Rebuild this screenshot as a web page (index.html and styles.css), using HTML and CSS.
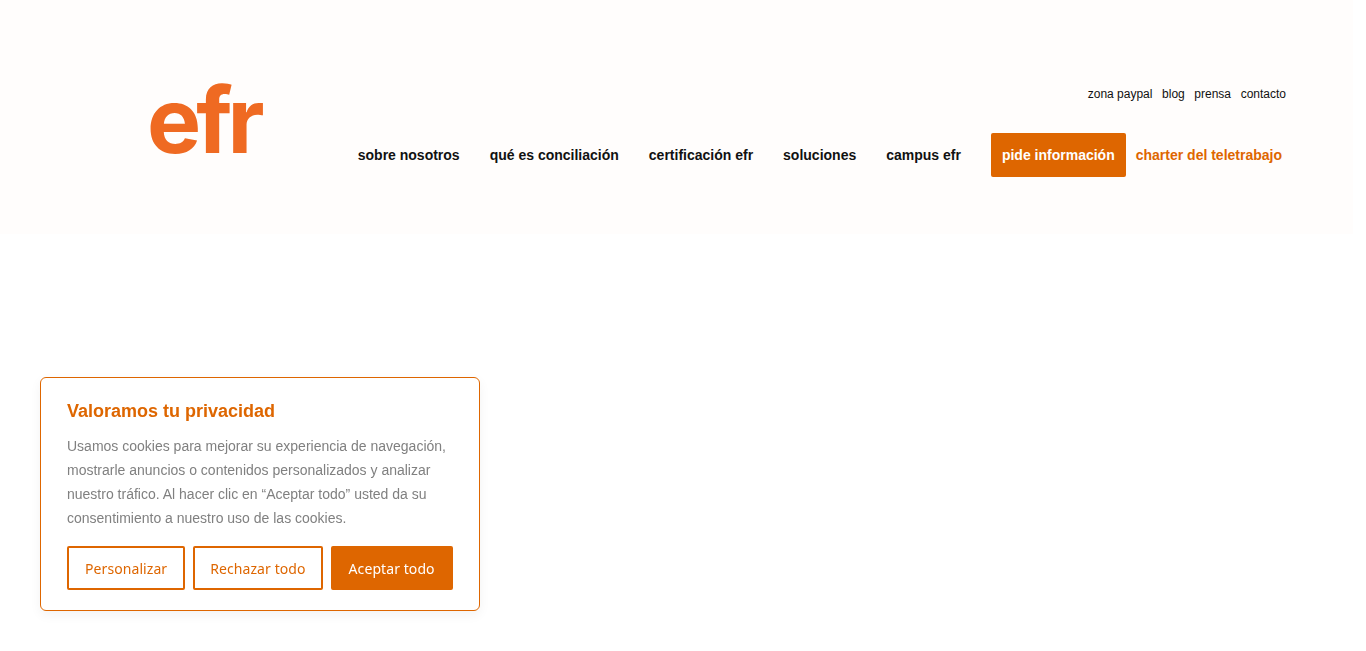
FILE: index.html
```html
<!DOCTYPE html>
<html lang="es">
<head>
    <meta charset="UTF-8">
    <meta name="viewport" content="width=device-width, initial-scale=1.0">
    <title>efr</title>
    <link rel="stylesheet" href="styles.css">
</head>
<body>
    <header class="site-header">
        <a class="logo" href="#">efr</a>
        <div class="nav-area">
            <nav class="top-nav">
                <a href="#">zona paypal</a>
                <a href="#">blog</a>
                <a href="#">prensa</a>
                <a href="#">contacto</a>
            </nav>
            <nav class="main-nav">
                <a href="#">sobre nosotros</a>
                <a href="#">qué es conciliación</a>
                <a href="#">certificación efr</a>
                <a href="#">soluciones</a>
                <a href="#">campus efr</a>
                <a class="nav-button" href="#">pide información</a>
                <a class="nav-accent" href="#">charter del teletrabajo</a>
            </nav>
        </div>
    </header>

    <div class="cookie-box">
        <div class="cookie-title">Valoramos tu privacidad</div>
        <p class="cookie-text">Usamos cookies para mejorar su experiencia de navegación, mostrarle anuncios o contenidos personalizados y analizar nuestro tráfico. Al hacer clic en “Aceptar todo” usted da su consentimiento a nuestro uso de las cookies.</p>
        <div class="cookie-actions">
            <button class="cookie-btn">Personalizar</button>
            <button class="cookie-btn reject">Rechazar todo</button>
            <button class="cookie-btn primary">Aceptar todo</button>
        </div>
    </div>
</body>
</html>
```

FILE: styles.css
```css
* {
    box-sizing: border-box;
    margin: 0;
    padding: 0;
}

body {
    min-height: 651px;
    background-color: #fff;
    font-family: 'Liberation Sans', Arial, sans-serif;
    overflow: hidden;
}

a {
    text-decoration: none;
    color: inherit;
}

.site-header {
    display: flex;
    justify-content: space-between;
    width: 1353px;
    height: 234px;
    padding: 0 67px 0 147px;
    background-color: #fffdfc;
}

.logo {
    margin-top: 65px;
    height: 110px;
    font-family: 'Inter', sans-serif;
    font-size: 91px;
    font-weight: 650;
    line-height: 110px;
    letter-spacing: -5px;
    color: #ef6a22;
}

.nav-area {
    display: flex;
    flex-direction: column;
    align-items: flex-end;
    padding-top: 87px;
}

.top-nav {
    display: flex;
    gap: 9.6px;
    font-size: 12px;
    line-height: 14px;
    color: #111;
}

.main-nav {
    display: flex;
    align-items: center;
    gap: 30px;
    margin-top: 32px;
    margin-right: -6px;
    font-size: 14px;
    font-weight: 700;
    color: #111;
}

.nav-button {
    padding: 0 11px;
    margin-right: -20px;
    line-height: 44px;
    border-radius: 2px;
    background-color: #de6600;
    color: #fff;
}

.nav-accent {
    padding-right: 10px;
    color: #de6600;
}

.cookie-box {
    position: fixed;
    left: 40px;
    bottom: 40px;
    width: 440px;
    height: 234px;
    padding: 22px 26px;
    background-color: #fff;
    border: 1px solid #de6600;
    border-radius: 6px;
    box-shadow: 0 4px 12px rgba(0, 0, 0, 0.05);
}

.cookie-title {
    font-size: 18px;
    font-weight: 700;
    line-height: 22px;
    color: #de6600;
}

.cookie-text {
    margin-top: 12px;
    font-size: 14px;
    line-height: 24px;
    color: #808080;
}

.cookie-actions {
    display: flex;
    gap: 8px;
    margin-top: 16px;
}

.cookie-btn {
    height: 44px;
    padding: 0 16px;
    background-color: #fff;
    border: 2px solid #de6600;
    border-radius: 2px;
    font-family: 'Noto Sans', sans-serif;
    font-size: 14px;
    letter-spacing: 0.08px;
    white-space: nowrap;
    color: #de6600;
}

.cookie-btn.reject {
    padding: 0 15px;
}

.cookie-btn.primary {
    background-color: #de6600;
    color: #fff;
}
```
